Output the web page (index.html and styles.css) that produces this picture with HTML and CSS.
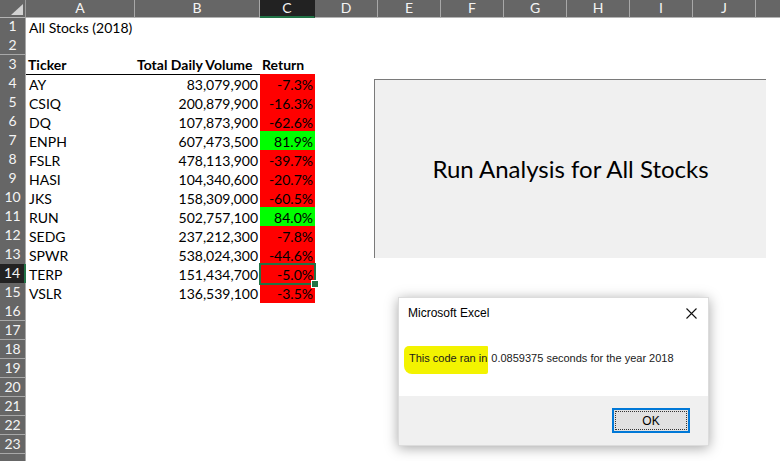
FILE: index.html
```html
<!DOCTYPE html>
<html>
<head>
<meta charset="utf-8">
<link rel="stylesheet" href="styles.css">
</head>
<body>
<div class="sheet">
  <div class="row hdr">
    <div class="corner"></div>
    <div class="ch">A</div><div class="ch">B</div><div class="ch sel">C</div><div class="ch">D</div><div class="ch">E</div><div class="ch">F</div><div class="ch">G</div><div class="ch">H</div><div class="ch">I</div><div class="ch">J</div><div class="ch last"></div>
  </div>
  <div class="row"><div class="rh">1</div><div class="c">All Stocks (2018)</div><div class="c"></div><div class="c"></div></div>
  <div class="row"><div class="rh">2</div></div>
  <div class="row head"><div class="rh">3</div><div class="c b ul">Ticker</div><div class="c b ul">Total Daily Volume</div><div class="c b ul">Return</div></div>
  <div class="row"><div class="rh">4</div><div class="c">AY</div><div class="c r">83,079,900</div><div class="c r neg">-7.3%</div></div>
  <div class="row"><div class="rh">5</div><div class="c">CSIQ</div><div class="c r">200,879,900</div><div class="c r neg">-16.3%</div></div>
  <div class="row"><div class="rh">6</div><div class="c">DQ</div><div class="c r">107,873,900</div><div class="c r neg">-62.6%</div></div>
  <div class="row"><div class="rh">7</div><div class="c">ENPH</div><div class="c r">607,473,500</div><div class="c r pos">81.9%</div></div>
  <div class="row"><div class="rh">8</div><div class="c">FSLR</div><div class="c r">478,113,900</div><div class="c r neg">-39.7%</div></div>
  <div class="row"><div class="rh">9</div><div class="c">HASI</div><div class="c r">104,340,600</div><div class="c r neg">-20.7%</div></div>
  <div class="row"><div class="rh">10</div><div class="c">JKS</div><div class="c r">158,309,000</div><div class="c r neg">-60.5%</div></div>
  <div class="row"><div class="rh">11</div><div class="c">RUN</div><div class="c r">502,757,100</div><div class="c r pos">84.0%</div></div>
  <div class="row"><div class="rh">12</div><div class="c">SEDG</div><div class="c r">237,212,300</div><div class="c r neg">-7.8%</div></div>
  <div class="row"><div class="rh">13</div><div class="c">SPWR</div><div class="c r">538,024,300</div><div class="c r neg">-44.6%</div></div>
  <div class="row"><div class="rh selr">14</div><div class="c">TERP</div><div class="c r">151,434,700</div><div class="c r neg active">-5.0%</div></div>
  <div class="row"><div class="rh">15</div><div class="c">VSLR</div><div class="c r">136,539,100</div><div class="c r neg">-3.5%</div></div>
  <div class="row"><div class="rh">16</div></div>
  <div class="row"><div class="rh">17</div></div>
  <div class="row"><div class="rh">18</div></div>
  <div class="row"><div class="rh">19</div></div>
  <div class="row"><div class="rh">20</div></div>
  <div class="row"><div class="rh">21</div></div>
  <div class="row"><div class="rh">22</div></div>
  <div class="row"><div class="rh">23</div></div>
  <div class="row"><div class="rh"></div></div>

  <div class="button"><span>Run Analysis for All Stocks</span></div>

  <div class="dialog">
    <div class="dlg-body">
      <div class="dlg-title">
        <span>Microsoft Excel</span>
        <svg class="close" width="11" height="11" viewBox="0 0 11 11"><path d="M0.5 0.5 L10.5 10.5 M10.5 0.5 L0.5 10.5" stroke="#111" stroke-width="1.1" fill="none"/></svg>
      </div>
      <div class="dlg-msg"><span class="hl">This code ran in</span> 0.0859375 seconds for the year 2018</div>
    </div>
    <div class="dlg-foot">
      <div class="ok"><span>OK</span></div>
    </div>
  </div>
</div>
</body>
</html>
```

FILE: styles.css
```css
* { box-sizing: border-box; }
html, body { margin: 0; padding: 0; background: #fff; }
body { width: 780px; height: 461px; overflow: hidden; }
.sheet {
  position: relative;
  width: 780px;
  height: 461px;
  overflow: hidden;
  font-family: Lato, "Open Sans", sans-serif;
  font-size: 14px;
  color: #000;
}
.row {
  display: grid;
  grid-template-columns: 26px 109px 125px 55px repeat(7, 63px) 1fr;
  height: 19px;
}
.row.hdr { height: 17px; }
.corner {
  background: #666;
  border-right: 1px solid #9a9a9a;
  border-bottom: 1px solid #b4b4b4;
  position: relative;
}
.corner::after {
  content: "";
  position: absolute;
  right: 2px;
  bottom: 2px;
  width: 0; height: 0;
  border-left: 12px solid transparent;
  border-bottom: 11px solid #d2d2d2;
}
.ch {
  background: #666;
  color: #f4f4f4;
  text-align: center;
  line-height: 16px;
  font-size: 14px;
  border-right: 1px solid #a8a8a8;
  border-bottom: 1px solid #b4b4b4;
}
.ch.sel {
  background: #222;
  border-bottom: 2px solid #217346;
  border-right-color: #222;
}
.ch.last { border-right: none; }
.rh {
  background: #666;
  color: #f4f4f4;
  text-align: center;
  font-size: 14px;
  line-height: 18px;
  border-right: 1px solid #a8a8a8;
  border-bottom: 1px solid #a8a8a8;
}
.rh.selr {
  background: #222;
  border-right: 2px solid #217346;
}
.c {
  padding: 0 3px;
  line-height: 19px;
  padding-top: 1px;
  white-space: nowrap;
  overflow: visible;
}
.c.r { text-align: right; padding-right: 2px; }
.c.b { font-weight: 700; padding-left: 2px; }
.c.ul { border-bottom: 1px solid #000; line-height: 18px; }
.neg { background: #ff0000; }
.pos { background: #00ff00; }
.active {
  position: relative;
  outline: 2px solid #217346;
  outline-offset: -1px;
}
.active::after {
  content: "";
  position: absolute;
  right: -4px;
  bottom: -4px;
  width: 6px;
  height: 6px;
  background: #217346;
  border: 1px solid #fff;
}
.button {
  position: absolute;
  left: 374px;
  top: 79px;
  width: 392px;
  height: 179px;
  background: #f0f0f0;
  border-left: 1px solid #7a7a7a;
  border-top: 1px solid #7a7a7a;
  display: flex;
  align-items: center;
  justify-content: center;
  font-family: Lato, "Open Sans", sans-serif;
  font-size: 24px;
  color: #000;
  padding-bottom: 2px;
}
.dialog {
  position: absolute;
  left: 398px;
  top: 297px;
  width: 311px;
  height: 149px;
  background: #f0f0f0;
  border: 1px solid #dcdcdc;
  box-shadow: 0 2px 12px rgba(0,0,0,0.35);
  display: flex;
  flex-direction: column;
  font-family: "Liberation Sans", Arial, sans-serif;
  font-size: 11px;
  color: #000;
}
.dlg-body {
  background: #fff;
  height: 98px;
  padding: 0 0 0 9px;
}
.dlg-title {
  display: flex;
  align-items: center;
  justify-content: space-between;
  height: 30px;
  font-size: 12px;
  padding-right: 11px;
}
.dlg-msg {
  margin-top: 24px;
  padding-left: 3px;
  font-size: 11px;
  color: #1a1a1a;
}
.hl {
  background: #f3f300;
  padding: 6px 1px 10px 5px;
  margin-left: -7px;
  border-radius: 5px 1px 2px 8px;
}
.dlg-foot {
  flex: 1;
  display: flex;
  justify-content: flex-end;
  align-items: flex-start;
  padding: 12px 18px 0 0;
}
.ok {
  width: 78px;
  height: 25px;
  background: #e1e1e1;
  border: 1px solid #0078d7;
  box-shadow: inset 0 0 0 1px #0078d7;
  padding: 2px;
  font-size: 12px;
}
.ok span {
  display: flex;
  align-items: center;
  justify-content: center;
  width: 100%;
  height: 100%;
  border: 1px dotted #333;
}
```
